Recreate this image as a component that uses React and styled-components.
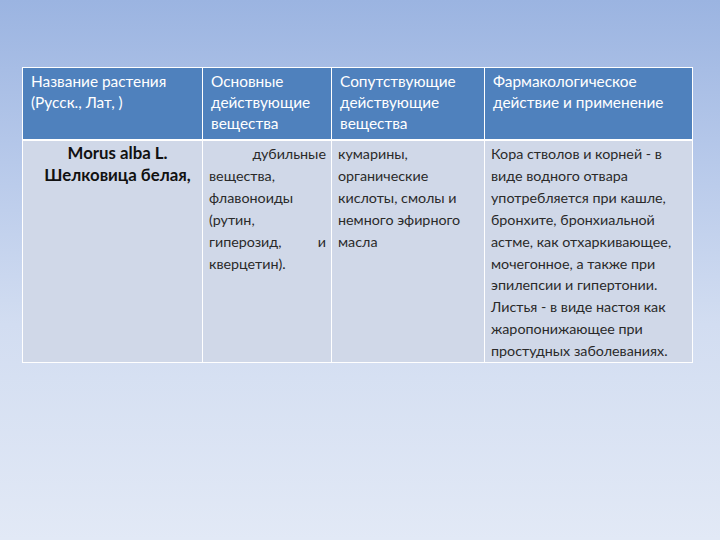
import React from "react";
import styled, { createGlobalStyle } from "styled-components";

const Global = createGlobalStyle`
  html, body { margin: 0; padding: 0; }
  body {
    width: 720px;
    height: 540px;
    overflow: hidden;
    font-family: Lato, "Open Sans", "Noto Sans", sans-serif;
  }
`;

const Slide = styled.div`
  width: 720px;
  height: 540px;
  box-sizing: border-box;
  padding: 67px 0 0 22px;
  background: linear-gradient(180deg, #9bb4e1 0%, #b7c9ea 30%, #d2ddf1 60%, #e2e9f6 100%);
`;

const Table = styled.table`
  border-collapse: collapse;
  table-layout: fixed;
  width: 670px;
  border: 1px solid #ffffff;
`;

const HeadCell = styled.th`
  background: #4f81bd;
  color: #ffffff;
  font-weight: 400;
  font-size: 15.4px;
  line-height: 21px;
  text-align: left;
  vertical-align: top;
  padding: 3px 4px 5px 8px;
  border: 1px solid #ffffff;
  border-bottom: 2px solid #ffffff;
  height: 62px;
  box-sizing: border-box;
`;

const BodyCell = styled.td`
  background: #d0d8e8;
  color: #2a2a2a;
  font-size: 14.3px;
  line-height: 21.9px;
  vertical-align: top;
  padding: 2px 5px 0 6px;
  border: 1px solid #ffffff;
  text-align: ${(p) => (p.$justify ? "justify" : "left")};
  white-space: nowrap;
`;

const NameCell = styled(BodyCell)`
  font-weight: 700;
  font-size: 16.8px;
  color: #111;
  text-align: center;
  line-height: 22px;
  padding: 1px 0 0 10px;
`;

const Para = styled.div`
  text-align: ${(p) => p.$align || "inherit"};
  text-align-last: ${(p) => p.$last || "auto"};
  white-space: normal;
`;

export default function App() {
  return (
    <>
      <Global />
      <Slide>
        <Table>
          <colgroup>
            <col style={{ width: 180 }} />
            <col style={{ width: 129 }} />
            <col style={{ width: 153 }} />
            <col style={{ width: 208 }} />
          </colgroup>
          <thead>
            <tr>
              <HeadCell>Название растения (Русск., Лат, )</HeadCell>
              <HeadCell>Основные действующие вещества</HeadCell>
              <HeadCell>Сопутствующие действующие вещества</HeadCell>
              <HeadCell>Фармакологическое действие и применение</HeadCell>
            </tr>
          </thead>
          <tbody>
            <tr>
              <NameCell>
                Morus alba L.
                <br />
                Шелковица белая,
              </NameCell>
              <BodyCell $justify>
                <Para $align="right">дубильные</Para>
                <Para>вещества,</Para>
                <Para>флавоноиды</Para>
                <Para>(рутин,</Para>
                <Para $align="justify" $last="justify">гиперозид, и</Para>
                <Para>кверцетин).</Para>
              </BodyCell>
              <BodyCell>
                кумарины,
                <br />
                органические
                <br />
                кислоты, смолы и
                <br />
                немного эфирного
                <br />
                масла
              </BodyCell>
              <BodyCell>
                Кора стволов и корней - в
                <br />
                виде водного отвара
                <br />
                употребляется при кашле,
                <br />
                бронхите, бронхиальной
                <br />
                астме, как отхаркивающее,
                <br />
                мочегонное, а также при
                <br />
                эпилепсии и гипертонии.
                <br />
                Листья - в виде настоя как
                <br />
                жаропонижающее при
                <br />
                простудных заболеваниях.
              </BodyCell>
            </tr>
          </tbody>
        </Table>
      </Slide>
    </>
  );
}
